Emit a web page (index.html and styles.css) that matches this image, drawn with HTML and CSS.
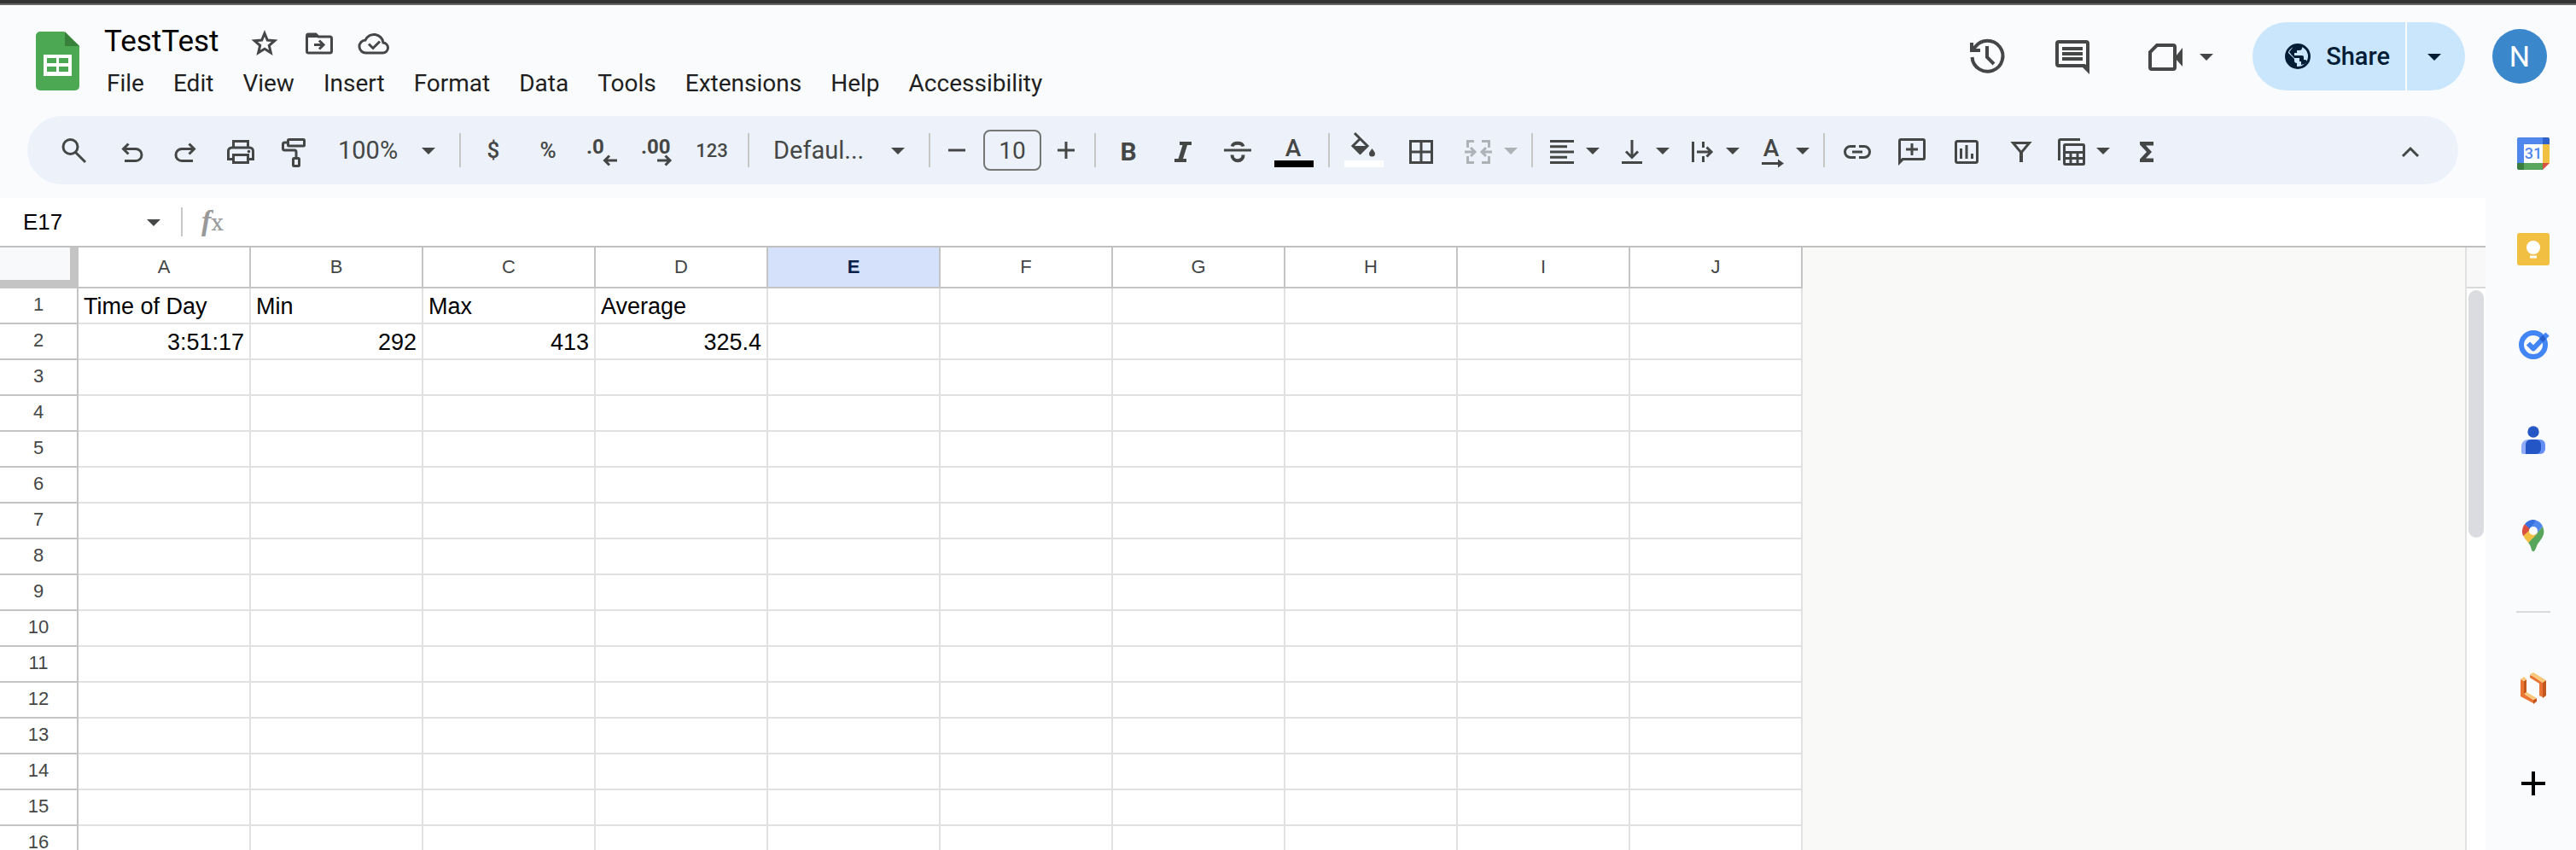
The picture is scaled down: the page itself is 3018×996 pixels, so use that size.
FILE: index.html
```html
<!DOCTYPE html>
<html lang="en">
<head>
<meta charset="utf-8">
<title>TestTest</title>
<link rel="stylesheet" href="styles.css">
</head>
<body class="app">
<svg class="defs" aria-hidden="true">
  <symbol id="caret" viewBox="0 0 20 20"><path fill="currentColor" d="M2 7h16l-8 8z"/></symbol>
</svg>

<header class="header">
  <svg class="logo" viewBox="0 0 80 80" role="img" aria-label="Sheets">
    <path fill="#4ca853" d="M19 11h28l18 17v47a5 5 0 0 1-5 5H19a5 5 0 0 1-5-5V16a5 5 0 0 1 5-5z"/>
    <path fill="#37813a" d="M48 11l17 17H48z"/>
    <path fill="#fff" fill-rule="evenodd" d="M23 38h33v25H23zM27 42v6h11v-6zM41 42v6h11v-6zM27 52v6h11v-6zM41 52v6h11v-6z"/>
  </svg>
  <div class="doc">
    <div class="title-row">
      <input class="title" type="text" value="TestTest" aria-label="Rename">
      <button class="tool" aria-label="Star"><svg class="icon" viewBox="0 0 40 40"><path class="line" d="M20 9l3.300 8 8.500.7-6.500 5.600 2 8.400-7.300-4.500-7.300 4.500 2-8.400-6.500-5.600 8.500-.7z"/></svg></button>
      <button class="tool" aria-label="Move"><svg class="icon" viewBox="0 0 40 40"><path class="line" d="M5.500 13v17a2 2 0 0 0 2 2h25a2 2 0 0 0 2-2V15a2 2 0 0 0-2-2H19l-3-3H7.500a2 2 0 0 0-2 2z"/><path class="solid" d="M5 9h11l4 5H5z"/><path class="line" d="M14 22.500h10M20 17.500l5 5-5 5"/></svg></button>
      <button class="tool" aria-label="Document status"><svg class="icon" viewBox="0 0 40 40"><path class="line" d="M11 32h19a6 6 0 0 0 1-12 11 11 0 0 0-21-3A7.500 7.500 0 0 0 11 32zM14 21.500l5 5 8-8"/></svg></button>
    </div>
    <nav class="menus">
      <button>File</button><button>Edit</button><button>View</button><button>Insert</button><button>Format</button><button>Data</button><button>Tools</button><button>Extensions</button><button>Help</button><button>Accessibility</button>
    </nav>
  </div>
  <div class="actions">
    <button class="action" aria-label="Version history"><svg class="icon-lg" viewBox="0 0 48 48"><path class="line thick" d="M6.500 25a18 18 0 1 0 3.500-12l-3 4M24 12v13l8 8"/><path class="solid" d="M4 8h4v7h8v4H4z"/></svg></button>
    <button class="action" aria-label="Comments"><svg class="icon-lg" viewBox="0 0 48 48"><path class="line thick" d="M8 7h32a2 2 0 0 1 2 2v29l-4-3H8a2 2 0 0 1-2-2V9a2 2 0 0 1 2-2z"/><path class="solid" d="M34 35h10v10z"/><path class="line thick" d="M12 15h24M12 21h24M12 27h24"/></svg></button>
    <button class="action meet" aria-label="Meet"><svg class="icon-lg" viewBox="0 0 48 48"><path class="line thick" d="M14 11h19a2 2 0 0 1 2 2v24a2 2 0 0 1-2 2H8a2 2 0 0 1-2-2V19z"/><path class="solid" d="M36 24l8-10v22l-8-9z"/></svg><svg class="caret"><use href="#caret"/></svg></button>
    <div class="share">
      <button class="share-main"><svg class="globe" viewBox="0 0 30 30" aria-hidden="true"><circle cx="15" cy="15" r="13.500" fill="none" stroke="currentColor" stroke-width="3"/><path fill="currentColor" d="M3 10l8 8v2a3 3 0 0 0 3 3v5C5 27 0 19 3 10zM10 3.500C14 1 19 2 20 4v1a3 3 0 0 1-3 3h-3v3h-3v3h9a2 2 0 0 1 2 2v3h1a3 3 0 0 1 3 2l-3 3-4 1v-4h-2v-4H11L5 10z"/></svg>Share</button>
      <button class="share-more" aria-label="Quick sharing actions"><svg class="caret"><use href="#caret"/></svg></button>
    </div>
    <button class="avatar" aria-label="Account">N</button>
  </div>
</header>

<div class="body">
  <main class="main">
    <div class="toolbar" role="toolbar">
      <button class="tool" aria-label="Search"><svg class="icon" viewBox="0 0 40 40"><path class="line" d="M18.500 22.500L30 34"/><circle class="line" cx="12.500" cy="16" r="8.500"/></svg></button>
      <button class="tool" aria-label="Undo"><svg class="icon" viewBox="0 0 40 40"><path class="line" d="M16.500 12.500l-6 6 6 6M11 18.500h14a6.700 6.700 0 0 1 0 14H12"/></svg></button>
      <button class="tool" aria-label="Redo"><svg class="icon" viewBox="0 0 40 40"><path class="line" d="M23.500 12.500l6 6-6 6M29 18.500H15a6.700 6.700 0 0 0 0 14h13"/></svg></button>
      <button class="tool" aria-label="Print"><svg class="icon" viewBox="0 0 40 40"><path class="line" d="M11.500 17V9.500h17V17M11 30.500H5.500V21a4 4 0 0 1 4-4h21a4 4 0 0 1 4 4v9.500H29"/><path class="line" d="M11.500 25.500h17v9h-17z"/><circle class="solid" cx="29.500" cy="21.500" r="1.800"/></svg></button>
      <button class="tool" aria-label="Paint format"><svg class="icon" viewBox="0 0 40 40"><rect class="line" x="11.500" y="7.500" width="19" height="7.500" rx="1"/><path class="line" d="M11 11H7.500a2 2 0 0 0-2 2v5a2 2 0 0 0 2 2H19a2 2 0 0 1 2 2v6"/><rect class="line" x="17.500" y="29.500" width="7" height="9" rx="1"/></svg></button>
      <label class="picker zoom"><select aria-label="Zoom"><option>100%</option></select><svg class="caret"><use href="#caret"/></svg></label>
      <span class="sep"></span>
      <button class="tool sign" aria-label="Format as currency">$</button>
      <button class="tool sign" aria-label="Format as percent">%</button>
      <button class="tool" aria-label="Decrease decimal places"><svg class="icon" viewBox="0 0 40 40"><text class="glyph" x="1" y="24">.0</text><path class="line" d="M37 32H23M28 26.500L22.500 32l5.500 5.500"/></svg></button>
      <button class="tool" aria-label="Increase decimal places"><svg class="icon" viewBox="0 0 40 40"><text class="glyph" x="1" y="24">.00</text><path class="line" d="M20 32h14M29.500 26.500L35 32l-5.500 5.500"/></svg></button>
      <button class="tool digits" aria-label="More formats">123</button>
      <span class="sep"></span>
      <label class="picker family"><select aria-label="Font"><option>Defaul...</option></select><svg class="caret"><use href="#caret"/></svg></label>
      <span class="sep"></span>
      <button class="tool step" aria-label="Decrease font size"><svg class="icon" viewBox="0 0 40 40"><path class="line" d="M12 20h20"/></svg></button>
      <input class="size" type="text" value="10" aria-label="Font size">
      <button class="tool step" aria-label="Increase font size"><svg class="icon" viewBox="0 0 40 40"><path class="line" d="M10 20h20M20 10v20"/></svg></button>
      <span class="sep"></span>
      <button class="tool" aria-label="Bold"><svg class="icon" viewBox="0 0 40 40"><text class="glyph bold" x="20" y="32">B</text></svg></button>
      <button class="tool" aria-label="Italic"><svg class="icon" viewBox="0 0 40 40"><path class="solid" d="M16 10h14v4h-5l-5 16h4v4H10v-4h4.500l5-16H16z"/></svg></button>
      <button class="tool" aria-label="Strikethrough"><svg class="icon" viewBox="0 0 40 40"><path class="line thick" d="M13.500 15.500c1.500-5 11.500-5 13 0M13.500 25.500c0 9 13.500 9 13 0"/><path class="line" d="M4 20h32"/></svg></button>
      <button class="tool" aria-label="Text color"><svg class="icon" viewBox="0 0 40 40"><text class="glyph letter" x="21" y="27">A</text><path d="M-1 32h46v8H-1z"/></svg></button>
      <span class="sep"></span>
      <button class="tool wide" aria-label="Fill color"><svg class="icon" viewBox="0 0 40 40"><path class="line" d="M10 0l7 7M16.500 6.500l8.500 8.500-8.500 8.500L8 15z"/><path class="solid" d="M7 15h19l-9.500 10zM30.500 18c2 3 3.500 4.500 3.500 6a3.500 3.500 0 0 1-7 0c0-1.500 1.500-3 3.500-6z"/><path fill="#fff" d="M-2 32h46v8H-2z"/></svg></button>
      <button class="tool wide" aria-label="Borders"><svg class="icon" viewBox="0 0 40 40"><path class="line" d="M9.500 9.500h25v25h-25zM22 9.500v25M9.500 22h25"/></svg></button>
      <button class="tool menu-tool merge" aria-label="Merge cells" disabled><svg class="icon" viewBox="0 0 40 40"><path class="line" d="M19 9.500h-7.500V17M28 9.500h8.500V17M19 34.500h-7.500V27M28 34.500h8.500V27M8 22h12M15 17l5 5-5 5M40 22H28M33 17l-5 5 5 5"/></svg><svg class="caret"><use href="#caret"/></svg></button>
      <span class="sep"></span>
      <button class="tool menu-tool" aria-label="Horizontal align"><svg class="icon" viewBox="0 0 40 40"><path class="line" d="M7 9.500h28M7 15.700h20M7 22h28M7 28.300h20M7 34.500h28"/></svg><svg class="caret"><use href="#caret"/></svg></button>
      <button class="tool menu-tool gap" aria-label="Vertical align"><svg class="icon" viewBox="0 0 40 40"><path class="line" d="M21 8v20M14 21.500l7 7 7-7M9 34.500h24"/></svg><svg class="caret"><use href="#caret"/></svg></button>
      <button class="tool menu-tool gap" aria-label="Text wrapping"><svg class="icon" viewBox="0 0 40 40"><path class="line" d="M10.500 10v24M22.500 10v7M22.500 27v7M15 22h16M26.500 16.500L32 22l-5.500 5.500"/></svg><svg class="caret"><use href="#caret"/></svg></button>
      <button class="tool menu-tool gap" aria-label="Text rotation"><svg class="icon" viewBox="0 0 40 40"><text class="glyph letter" x="20" y="27">A</text><path class="line" d="M9 35.500h20"/><path class="solid" d="M28 30.500l7 5-7 5z"/></svg><svg class="caret"><use href="#caret"/></svg></button>
      <span class="sep"></span>
      <button class="tool" aria-label="Insert link"><svg class="icon" viewBox="0 0 40 40"><path class="line" d="M18 15.500h-6a6.500 6.500 0 0 0 0 13h6M22 15.500h6a6.500 6.500 0 0 1 0 13h-6M14 22h12"/></svg></button>
      <button class="tool" aria-label="Insert comment"><svg class="icon" viewBox="0 0 40 40"><path class="line" d="M5.500 34V9a1.500 1.500 0 0 1 1.500-1.500h26A1.500 1.500 0 0 1 34.500 9v20a1.500 1.500 0 0 1-1.500 1.500H9zM13 19h14M20 12v14"/><path class="solid" d="M4 30h8l-8 8z"/></svg></button>
      <button class="tool" aria-label="Insert chart"><svg class="icon" viewBox="0 0 40 40"><rect class="line" x="7.500" y="9.500" width="25" height="25" rx="2"/><path class="line" d="M13.500 18v12M20 14v16M26.500 24v6"/></svg></button>
      <button class="tool" aria-label="Create a filter"><svg class="icon" viewBox="0 0 40 40"><path class="line" d="M10.500 11.500h19L20 23z"/><path class="line thick" d="M20 21v13"/></svg></button>
      <button class="tool menu-tool" aria-label="Table views"><svg class="icon" viewBox="0 0 40 40"><path class="line" d="M5.500 32V9A1.500 1.500 0 0 1 7 7.500h23"/><rect class="line" x="11.500" y="13.500" width="23" height="23" rx="1"/><path class="line" d="M11.500 22.500h23M11.500 29.500h23M19 22.500v14M27 22.500v14"/></svg><svg class="caret"><use href="#caret"/></svg></button>
      <button class="tool gap" aria-label="Functions"><svg class="icon" viewBox="0 0 40 40"><path class="solid" d="M13 10h16v4.500h-9l7 7.500-7 7.500h9V34H13v-3.500l8-8.500-8-8.500z"/></svg></button>
      <button class="tool last" aria-label="Hide the menus"><svg class="icon" viewBox="0 0 40 40"><path class="line" d="M11 27l9-9 9 9"/></svg></button>
    </div>

    <div class="formula-bar">
      <input class="name-box" type="text" value="E17" aria-label="Name box">
      <button class="name-more" aria-label="Named ranges"><svg class="caret"><use href="#caret"/></svg></button>
      <span class="fx"><i>f</i>x</span>
      <input class="formula" type="text" aria-label="Formula">
    </div>

    <div class="workspace">
      <div class="viewport">
        <table class="sheet">
          <colgroup><col class="col-num"><col span="10" class="col-cell"></colgroup>
          <thead><tr><th class="corner"></th><th>A</th><th>B</th><th>C</th><th>D</th><th class="active">E</th><th>F</th><th>G</th><th>H</th><th>I</th><th>J</th></tr></thead>
          <tbody>
            <tr><th>1</th><td>Time of Day</td><td>Min</td><td>Max</td><td>Average</td><td></td><td></td><td></td><td></td><td></td><td></td></tr>
            <tr><th>2</th><td class="num">3:51:17</td><td class="num">292</td><td class="num">413</td><td class="num">325.4</td><td></td><td></td><td></td><td></td><td></td><td></td></tr>
            <tr><th>3</th><td></td><td></td><td></td><td></td><td></td><td></td><td></td><td></td><td></td><td></td></tr>
            <tr><th>4</th><td></td><td></td><td></td><td></td><td></td><td></td><td></td><td></td><td></td><td></td></tr>
            <tr><th>5</th><td></td><td></td><td></td><td></td><td></td><td></td><td></td><td></td><td></td><td></td></tr>
            <tr><th>6</th><td></td><td></td><td></td><td></td><td></td><td></td><td></td><td></td><td></td><td></td></tr>
            <tr><th>7</th><td></td><td></td><td></td><td></td><td></td><td></td><td></td><td></td><td></td><td></td></tr>
            <tr><th>8</th><td></td><td></td><td></td><td></td><td></td><td></td><td></td><td></td><td></td><td></td></tr>
            <tr><th>9</th><td></td><td></td><td></td><td></td><td></td><td></td><td></td><td></td><td></td><td></td></tr>
            <tr><th>10</th><td></td><td></td><td></td><td></td><td></td><td></td><td></td><td></td><td></td><td></td></tr>
            <tr><th>11</th><td></td><td></td><td></td><td></td><td></td><td></td><td></td><td></td><td></td><td></td></tr>
            <tr><th>12</th><td></td><td></td><td></td><td></td><td></td><td></td><td></td><td></td><td></td><td></td></tr>
            <tr><th>13</th><td></td><td></td><td></td><td></td><td></td><td></td><td></td><td></td><td></td><td></td></tr>
            <tr><th>14</th><td></td><td></td><td></td><td></td><td></td><td></td><td></td><td></td><td></td><td></td></tr>
            <tr><th>15</th><td></td><td></td><td></td><td></td><td></td><td></td><td></td><td></td><td></td><td></td></tr>
            <tr><th>16</th><td></td><td></td><td></td><td></td><td></td><td></td><td></td><td></td><td></td><td></td></tr>
          </tbody>
        </table>
      </div>
      <div class="scrollbar"><div class="scroll-cap"></div><div class="thumb"></div></div>
    </div>
  </main>

  <aside class="side">
    <button aria-label="Calendar"><svg class="icon-lg" viewBox="0 0 48 48"><path fill="#fff" d="M13 13h22v22H13z"/><path fill="#5087ec" d="M7 5h28v8H13v22H5V7a2 2 0 0 1 2-2z"/><path fill="#2f63cb" d="M35 5h6a2 2 0 0 1 2 2v6h-8z"/><path fill="#f1bf42" d="M35 13h8v22h-8z"/><path fill="#58a55c" d="M13 35h22v8H13z"/><path fill="#3a7e3f" d="M5 35h8v8H7a2 2 0 0 1-2-2z"/><path fill="#d95040" d="M35 35h8l-8 8z"/><text class="cal-day" x="24" y="30">31</text></svg></button>
    <button aria-label="Keep"><svg class="icon-lg" viewBox="0 0 48 48"><rect x="5" y="5" width="38" height="38" rx="3" fill="#f1bf42"/><circle cx="24" cy="22" r="8" fill="#fff"/><path fill="#fff" d="M20 26h8v3h-8zM20 31.500h8v3h-8z"/></svg></button>
    <button aria-label="Tasks"><svg class="icon-lg" viewBox="0 0 48 48"><circle cx="24" cy="24" r="14" fill="none" stroke="#4285f4" stroke-width="6"/><path fill="none" stroke="#4285f4" stroke-width="6" stroke-linejoin="round" d="M18 22.500l6 6 16.500-17"/><path fill="#2a5fd0" d="M31 17l4-4.500 4 4.500-4 4z"/></svg></button>
    <button aria-label="Contacts"><svg class="icon-lg" viewBox="0 0 48 48"><circle cx="24" cy="14" r="6.700" fill="#2457c5"/><path fill="#91adf8" d="M18 23h8v17H12a2 2 0 0 1-2-2v-7a8 8 0 0 1 8-8z"/><path fill="#668ff5" d="M26 23h6a6 6 0 0 1 6 6v5a6 6 0 0 1-6 6h-6z"/><path fill="#2457c5" d="M21 23h6a6 6 0 0 1 6 6v5a6 6 0 0 1-6 6H15V29a6 6 0 0 1 6-6z"/></svg></button>
    <button aria-label="Maps"><svg class="icon-lg" viewBox="0 0 48 48"><path fill="#58a55c" d="M35 13c5 11-5 17-7 23-2 4-2 6-4 6s-2-2-3-5-2-4-3-5z"/><path fill="#f1bf42" d="M12 23l8-10 9 8-11 11c-3-4-5-6-6-9z"/><path fill="#d95040" d="M14 10l7 6-9 8c-2-5-1-10 2-14z"/><path fill="#3871e0" d="M14 10c4-5 10-6 14-4l-8 10z"/><path fill="#5087ec" d="M28 6c3 1 6 4 7 7l-9 10-6-8z"/><circle cx="24" cy="18" r="5" fill="#fff"/></svg></button>
    <hr>
    <button aria-label="Lucidchart"><svg class="icon-lg" viewBox="0 0 48 48"><path fill="#ea7434" d="M9 14l4 2v15l11 7v4L9 34zM20 9l3 1 12 8v17l-4-2V19L20 12z"/><path fill="#c4571e" d="M13 16l3-2v16l-3 2zM35 17l4-2v18l-4 3zM24 38l4-2v4l-4 3z"/><path fill="#f8c77a" d="M9 14l4-3 3 3-3 2zM20 8l4-2 15 9-4 3zM13 31l3-2 12 7-4 2z"/></svg></button>
    <button aria-label="Get add-ons"><svg class="icon-lg" viewBox="0 0 48 48"><path fill="none" stroke="#000" stroke-width="4" d="M10 24h28M24 10v28"/></svg></button>
  </aside>
</div>
</body>
</html>
```

FILE: styles.css
```css
* { box-sizing: border-box; }

.app {
  margin: 0;
  height: 100vh;
  overflow: hidden;
  display: flex;
  flex-direction: column;
  background: #f9fbfd;
  border-top: 4px solid #333;
  font-family: Roboto, "Liberation Sans", sans-serif;
  font-size: 28px;
  color: #444746;
}

.defs { display: none; }

button, input, select {
  margin: 0;
  padding: 0;
  border: 0;
  background: none;
  font: inherit;
  color: inherit;
  outline: 0;
}

svg { flex: none; }
.icon { width: 40px; height: 40px; overflow: visible; display: block; }
.icon-lg { width: 48px; height: 48px; display: block; }
.caret { width: 20px; height: 20px; display: block; }
.line { fill: none; stroke: currentColor; stroke-width: 3; }
.thick { stroke-width: 4; }
.solid { fill: currentColor; }
.glyph { fill: currentColor; font-size: 24px; font-weight: 700; }
.bold { font-size: 30px; text-anchor: middle; }
.letter { font-size: 28px; font-weight: 500; text-anchor: middle; }

/* Header */
.header {
  flex: none;
  display: flex;
  align-items: flex-start;
  height: 132px;
  padding: 20px 34px 0 28px;
  border-top: 2px solid #666;
}
.logo { width: 80px; height: 80px; }
.title-row { display: flex; align-items: center; height: 48px; padding-left: 6px; }
.title { width: 164px; padding: 0 0 4px 8px; font-size: 35px; color: #000; }
.menus { display: flex; color: #1f1f1f; }
.menus button { height: 46px; padding: 0 17px; }

.actions { display: flex; align-items: center; gap: 20px; margin-left: auto; }
.action { display: flex; align-items: center; justify-content: center; gap: 14px; width: 80px; height: 80px; }
.meet { width: 131px; }
.share { display: flex; gap: 2px; height: 80px; margin-right: 12px; color: #001d35; }
.share button { background: #c9e6fd; display: flex; align-items: center; }
.share-main { gap: 18px; padding: 0 18px 0 38px; border-radius: 40px 0 0 40px; font-size: 29px; font-weight: 500; }
.share-more { padding: 0 26px 0 22px; border-radius: 0 40px 40px 0; }
.globe { width: 30px; height: 30px; }
.avatar { width: 64px; height: 64px; border-radius: 50%; background: #3b87cb; color: #fff; font-size: 34px; }

/* Columns under the header */
.body { flex: 1; min-height: 0; display: flex; }
.main { flex: 1; min-width: 0; display: flex; flex-direction: column; }

/* Toolbar */
.toolbar {
  flex: none;
  display: flex;
  align-items: center;
  height: 80px;
  margin: 0 32px 16px;
  padding: 0 24px 0 26px;
  border-radius: 40px;
  background: #edf2fa;
}
.tool { flex: none; width: 64px; height: 56px; display: flex; align-items: center; justify-content: center; }
.wide { width: 66px; }
.step { width: 46px; }
.menu-tool { width: 78px; padding-left: 7px; padding-right: 4px; gap: 7px; justify-content: flex-start; }
.merge { width: 88px; padding-left: 12px; gap: 12px; color: #aeb1b5; }
.gap { margin-left: 4px; }
.last { margin-left: auto; }
.sign { font-size: 26px; font-weight: 500; }
.digits { font-size: 22px; font-weight: 500; }
.sep { flex: none; width: 2px; height: 40px; margin: 0 6px 0 10px; background: #c7c7c7; }
.picker { flex: none; display: grid; align-items: center; font-size: 29px; }
.picker > * { grid-area: 1 / 1; }
.picker select { appearance: none; width: 100%; height: 56px; }
.picker .caret { justify-self: end; margin-right: 16px; pointer-events: none; }
.zoom { width: 150px; }
.zoom select { padding-left: 18px; }
.family { width: 194px; }
.family select { padding-left: 22px; }
.size {
  flex: none;
  width: 68px;
  height: 48px;
  margin: 0 6px 0 10px;
  border: 2px solid #747775;
  border-radius: 8px;
  text-align: center;
}

/* Formula bar */
.formula-bar {
  flex: none;
  display: flex;
  align-items: center;
  height: 58px;
  background: #fff;
  border-bottom: 2px solid #c0c0c0;
  font-family: "Liberation Sans", Arial, sans-serif;
}
.name-box { width: 164px; padding-left: 27px; font-size: 26px; color: #000; }
.name-more { padding: 0 22px 0 6px; height: 34px; border-right: 2px solid #c7c7c7; }
.fx { padding-left: 22px; font-family: "DejaVu Serif", serif; font-size: 26px; line-height: 34px; color: #999; }
.fx i { font-family: "Liberation Serif", serif; font-size: 34px; font-weight: 700; }
.formula { flex: 1; font-size: 26px; }

/* Sheet */
.workspace { flex: 1; min-height: 0; display: flex; background: #f9f9f7; }
.viewport { flex: 1; min-width: 0; overflow: hidden; }
.sheet {
  table-layout: fixed;
  width: 2112px;
  border-collapse: separate;
  border-spacing: 0;
  background: #fff;
  font-family: "Liberation Sans", Arial, sans-serif;
  font-size: 27px;
  line-height: 30px;
  color: #000;
}
.col-num { width: 92px; }
.col-cell { width: 202px; }
.sheet th, .sheet td { height: 42px; padding: 2px 6px 0; border: solid #e1e1e1; border-width: 0 2px 2px 0; white-space: nowrap; text-align: left; }
.sheet th { padding: 0; border-color: #c4c4c4; text-align: center; font-size: 22px; line-height: 24px; font-weight: 400; color: #444746; }
.sheet tbody th { padding-bottom: 2px; }
.sheet thead th { height: 48px; }
.sheet .corner { background: #f8f9fb; border-width: 0 10px 10px 0; }
.sheet .active { background: #d5e1fb; color: #041e49; font-weight: 700; }
.sheet .num { text-align: right; }

.scrollbar { flex: none; width: 24px; background: #fff; border-left: 2px solid #e1e1e1; }
.scroll-cap { height: 48px; background: #f8f8f8; border-bottom: 2px solid #d9d9d9; }
.thumb { height: 290px; margin: 2px; border-radius: 9px; background: #dadce0; }

/* Side panel */
.side { flex: none; width: 106px; display: flex; flex-direction: column; gap: 24px; align-items: center; padding-left: 6px; }
.side button { flex: none; width: 88px; height: 88px; display: flex; align-items: center; justify-content: center; }
.side hr { width: 40px; height: 2px; margin: 20px 0; border: 0; background: #d9d9d9; }
.cal-day { font-size: 18px; font-weight: 500; text-anchor: middle; fill: #5087ec; }
```
